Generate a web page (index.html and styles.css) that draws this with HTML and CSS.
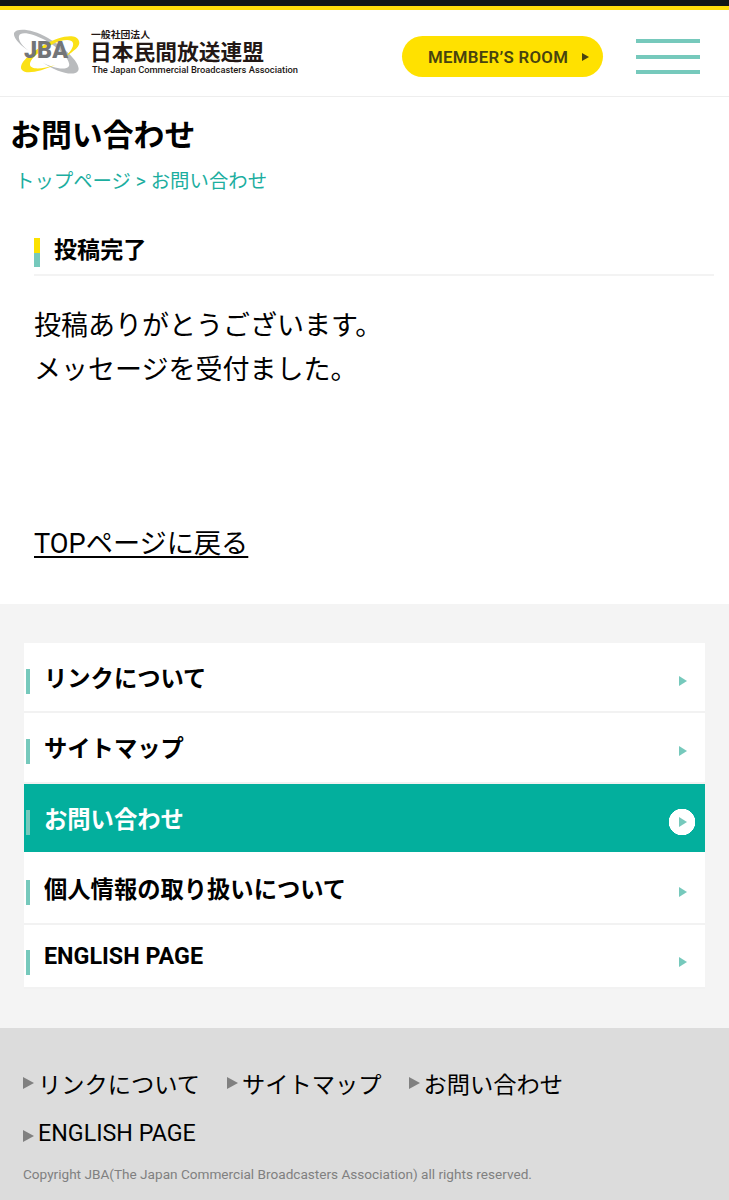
FILE: index.html
```
<!DOCTYPE html>
<html lang="ja">
<head>
<meta charset="utf-8">
<title>お問い合わせ</title>
<link rel="stylesheet" href="styles.css">
</head>
<body>

<header id="header">
    <a class="logo" href="#">
        <svg width="290" height="56" viewBox="0 -6 290 56">
            <g fill-rule="evenodd">
                <path fill="#b9bbbd" d="M0 4C2-1 17-1 34 9C53 20 68 36 64 42C60 48 42 43 28 33C38 39 52 42 55 37C57 31 45 19 31 11C18 4 6 2 5 7C4 11 8 17 15 22C6 16-1 9 0 4Z"/>
                <path fill="#fbe116" d="M65 12C62 4 46 7 30 16C13 26 4 36 8 41C12 46 28 42 41 36C29 40 17 41 16 36C15 31 24 23 37 16C47 11 57 9 59 14C60 18 56 23 51 28C60 22 67 17 65 12Z"/>
            </g>
            <text class="logo-mark" x="10" y="28.5" textLength="44" lengthAdjust="spacingAndGlyphs">JBA</text>
            <text class="logo-kind" x="77" y="9" textLength="59" lengthAdjust="spacingAndGlyphs">一般社団法人</text>
            <text class="logo-name" x="76" y="31" textLength="174" lengthAdjust="spacingAndGlyphs">日本民間放送連盟</text>
            <text class="logo-en" x="78" y="43.5" textLength="206" lengthAdjust="spacingAndGlyphs">The Japan Commercial Broadcasters Association</text>
        </svg>
    </a>
    <a class="members" href="#"><span>MEMBER’S ROOM</span></a>
    <div class="menu"><span></span><span></span><span></span></div>
</header>

<main>
    <h1>お問い合わせ</h1>
    <p class="breadcrumb"><a href="#">トップページ</a> &gt; お問い合わせ</p>

    <section class="content">
        <h2>投稿完了</h2>
        <p>投稿ありがとうございます。<br>メッセージを受付ました。</p>
        <a class="back" href="#">TOPページに戻る</a>
    </section>
</main>

<nav class="local">
    <ul>
        <li><a href="#">リンクについて</a></li>
        <li><a href="#">サイトマップ</a></li>
        <li class="current"><a href="#">お問い合わせ</a></li>
        <li><a href="#">個人情報の取り扱いについて</a></li>
        <li class="en"><a href="#">ENGLISH PAGE</a></li>
    </ul>
</nav>

<footer>
    <ul>
        <li><a href="#">リンクについて</a></li>
        <li><a href="#">サイトマップ</a></li>
        <li><a href="#">お問い合わせ</a></li>
        <li class="en"><a href="#">ENGLISH PAGE</a></li>
    </ul>
    <p>Copyright JBA(The Japan Commercial Broadcasters Association) all rights reserved.</p>
</footer>

</body>
</html>
```
FILE: styles.css
```
* {
    box-sizing: border-box;
    margin: 0;
    padding: 0;
}

body {
    background: #fff;
    color: #000;
    font-family: Roboto, "Noto Sans CJK JP", sans-serif;
    font-size: 27.2px;
    line-height: 44px;
}

a {
    color: inherit;
    text-decoration: none;
}

ul {
    list-style: none;
}

/* header */
#header {
    display: flex;
    align-items: flex-start;
    height: 97px;
    padding: 17px 29px 0 14px;
    border-top: 6px solid #111516;
    border-bottom: 1px solid #eee;
    box-shadow: inset 0 4px #fedd0b;
}

.logo svg {
    display: block;
}

.logo-mark {
    fill: #737578;
    font: 900 23.5px Roboto, sans-serif;
}

.logo-kind,
.logo-name {
    fill: #231815;
    font: bold 9.5px "Noto Sans CJK JP", sans-serif;
}

.logo-name {
    font-size: 21.5px;
}

.logo-en {
    fill: #231815;
    font: 500 9.3px Roboto, sans-serif;
}

.members {
    display: flex;
    align-items: center;
    justify-content: space-between;
    width: 201px;
    height: 41px;
    margin: 13px 0 0 98px;
    padding: 1px 14px 0 26px;
    border-radius: 21px;
    background: #ffe100;
    color: #48430f;
    font: 600 16.8px Roboto, sans-serif;
    letter-spacing: .3px;
    white-space: nowrap;
}

.members::after {
    content: "";
    border-left: 7px solid #48430f;
    border-top: 4px solid transparent;
    border-bottom: 4px solid transparent;
}

.menu {
    display: flex;
    flex-direction: column;
    justify-content: space-between;
    width: 64px;
    height: 35px;
    margin: 16px 0 0 auto;
}

.menu span {
    height: 4px;
    background: #76c9bc;
}

/* main */
main {
    height: 507px;
    padding: 17px 15px 0 10px;
}

h1 {
    font-size: 30.9px;
    line-height: 44px;
}

.breadcrumb {
    margin-top: 9px;
    padding-left: 5px;
    color: #1cae9f;
    font-size: 19.4px;
    line-height: 30px;
}

.content {
    margin: 35px 0 0 24px;
}

h2 {
    display: flex;
    align-items: center;
    height: 44px;
    padding-bottom: 4px;
    border-bottom: 2px solid #f3f3f3;
    font-size: 23.1px;
}

h2::before {
    content: "";
    width: 6px;
    height: 29px;
    margin: 3px 14px 0 0;
    background: linear-gradient(#fbe100 50%, #76c9bc 50%);
}

.content p {
    margin-top: 28px;
    font-size: 27px;
}

.back {
    display: inline-block;
    margin-top: 130px;
    text-decoration: underline;
    text-decoration-thickness: 2px;
    text-decoration-skip-ink: none;
    text-underline-offset: 3px;
}

/* local navigation */
.local {
    height: 424px;
    padding: 39px 24px 0;
    background: #f4f4f4;
}

.local li {
    height: 70.4px;
    border-bottom: 2px solid #f2f2f2;
    background: #fff;
    font-size: 23.3px;
    font-weight: bold;
    line-height: 34px;
}

.local a {
    display: flex;
    align-items: flex-start;
    height: 100%;
    padding: 19px 18px 0 2px;
}

.local a::before {
    content: "";
    width: 4px;
    height: 25px;
    margin: 7px 14px 0 0;
    background: #76c9bc;
}

.local a::after {
    content: "";
    margin: 14px 0 0 auto;
    border-left: 8px solid #76c9bc;
    border-top: 5px solid transparent;
    border-bottom: 5px solid transparent;
}

.local .current {
    border-bottom-color: #fff;
    background: #03af9d;
    color: #fff;
}

.local .current a {
    background: radial-gradient(circle at calc(100% - 23px) 38px, #fff 13px, transparent 13.5px);
}

.local .en {
    height: 64px;
}

.local .en a {
    padding-top: 14px;
}

.local .en a::before {
    margin-top: 11px;
}

.local .en a::after {
    margin-top: 18px;
}

/* footer */
footer {
    height: 172px;
    padding: 38px 23px 0;
    background: #dcdcdc;
}

footer ul {
    display: flex;
    flex-wrap: wrap;
    column-gap: 27px;
    font-size: 23.25px;
}

footer li {
    display: flex;
    align-items: center;
    height: 37px;
}

footer li::before {
    content: "";
    margin: 0 4px 4px 0;
    border-left: 11px solid #808080;
    border-top: 6px solid transparent;
    border-bottom: 6px solid transparent;
}

footer .en {
    height: 60px;
}

footer .en::before {
    margin: 6px 4px 0 0;
}

footer p {
    margin-top: 1px;
    color: #808080;
    font-size: 13.6px;
    line-height: 20px;
}
```
